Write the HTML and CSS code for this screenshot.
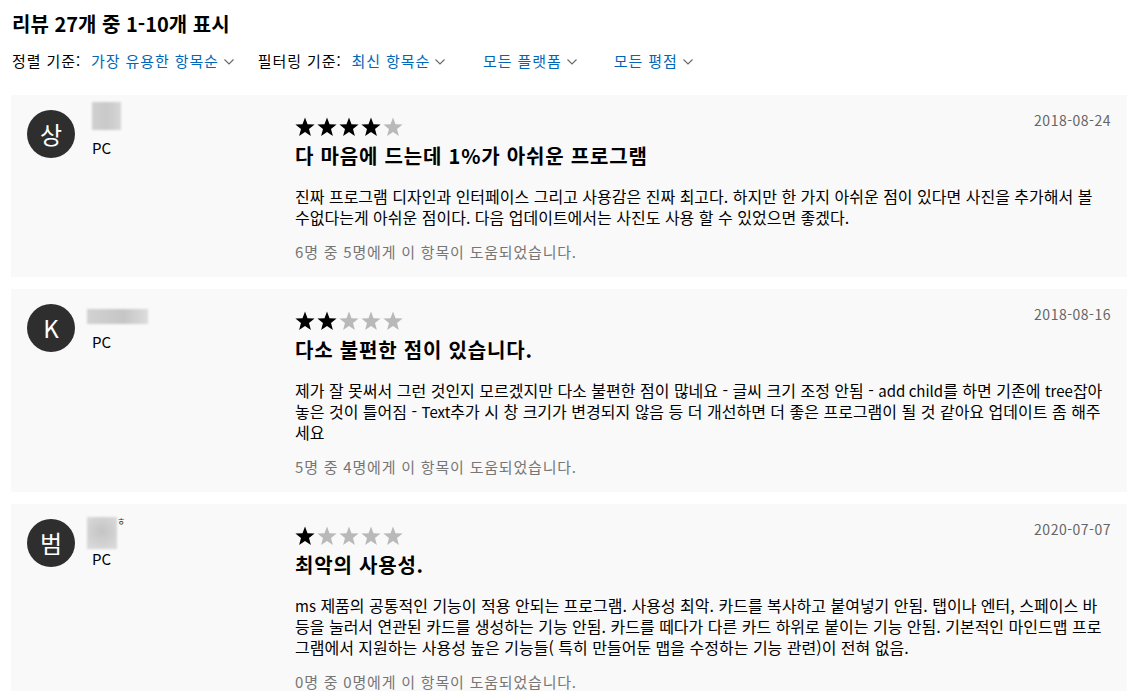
FILE: index.html
```html
<!DOCTYPE html>
<html lang="ko">
<head>
<meta charset="utf-8">
<title>리뷰</title>
<link rel="stylesheet" href="styles.css">
</head>
<body>
<div class="page">
  <h1 class="heading">리뷰 27개 중 1-10개 표시</h1>
  <div class="filters">
    <div class="group">
      <span class="label">정렬 기준:</span>
      <span class="select">가장 유용한 항목순<svg class="chev" viewBox="0 0 10 6"><path d="M0.5 0.5 L5 5 L9.5 0.5"/></svg></span>
    </div>
    <div class="group g2">
      <span class="label">필터링 기준:</span>
      <span class="select">최신 항목순<svg class="chev" viewBox="0 0 10 6"><path d="M0.5 0.5 L5 5 L9.5 0.5"/></svg></span>
    </div>
    <div class="group g3">
      <span class="select">모든 플랫폼<svg class="chev" viewBox="0 0 10 6"><path d="M0.5 0.5 L5 5 L9.5 0.5"/></svg></span>
    </div>
    <div class="group g4">
      <span class="select">모든 평점<svg class="chev" viewBox="0 0 10 6"><path d="M0.5 0.5 L5 5 L9.5 0.5"/></svg></span>
    </div>
  </div>

  <div class="reviews">
    <div class="card">
      <div class="author">
        <div class="avatar">상</div>
        <div class="who">
          <div class="namewrap"><div class="blur blur-sq"></div></div>
          <div class="platform">PC</div>
        </div>
      </div>
      <div class="content">
        <div class="top">
          <div class="stars">
            <svg class="star on" viewBox="0 0 20 20"><polygon points="10,0.5 12.5,7.2 19.6,7.5 14,11.9 15.9,18.9 10,14.9 4.1,18.9 6,11.9 0.4,7.5 7.5,7.2"/></svg>
            <svg class="star on" viewBox="0 0 20 20"><polygon points="10,0.5 12.5,7.2 19.6,7.5 14,11.9 15.9,18.9 10,14.9 4.1,18.9 6,11.9 0.4,7.5 7.5,7.2"/></svg>
            <svg class="star on" viewBox="0 0 20 20"><polygon points="10,0.5 12.5,7.2 19.6,7.5 14,11.9 15.9,18.9 10,14.9 4.1,18.9 6,11.9 0.4,7.5 7.5,7.2"/></svg>
            <svg class="star on" viewBox="0 0 20 20"><polygon points="10,0.5 12.5,7.2 19.6,7.5 14,11.9 15.9,18.9 10,14.9 4.1,18.9 6,11.9 0.4,7.5 7.5,7.2"/></svg>
            <svg class="star off" viewBox="0 0 20 20"><polygon points="10,0.5 12.5,7.2 19.6,7.5 14,11.9 15.9,18.9 10,14.9 4.1,18.9 6,11.9 0.4,7.5 7.5,7.2"/></svg>
          </div>
          <div class="date">2018-08-24</div>
        </div>
        <h2 class="title">다 마음에 드는데 1%가 아쉬운 프로그램</h2>
        <p class="body">진짜 프로그램 디자인과 인터페이스 그리고 사용감은 진짜 최고다. 하지만 한 가지 아쉬운 점이 있다면 사진을 추가해서 볼 수없다는게 아쉬운 점이다. 다음 업데이트에서는 사진도 사용 할 수 있었으면 좋겠다.</p>
        <p class="helpful">6명 중 5명에게 이 항목이 도움되었습니다.</p>
      </div>
    </div>

    <div class="card">
      <div class="author">
        <div class="avatar">K</div>
        <div class="who">
          <div class="namewrap"><div class="blur blur-wide"></div></div>
          <div class="platform">PC</div>
        </div>
      </div>
      <div class="content">
        <div class="top">
          <div class="stars">
            <svg class="star on" viewBox="0 0 20 20"><polygon points="10,0.5 12.5,7.2 19.6,7.5 14,11.9 15.9,18.9 10,14.9 4.1,18.9 6,11.9 0.4,7.5 7.5,7.2"/></svg>
            <svg class="star on" viewBox="0 0 20 20"><polygon points="10,0.5 12.5,7.2 19.6,7.5 14,11.9 15.9,18.9 10,14.9 4.1,18.9 6,11.9 0.4,7.5 7.5,7.2"/></svg>
            <svg class="star off" viewBox="0 0 20 20"><polygon points="10,0.5 12.5,7.2 19.6,7.5 14,11.9 15.9,18.9 10,14.9 4.1,18.9 6,11.9 0.4,7.5 7.5,7.2"/></svg>
            <svg class="star off" viewBox="0 0 20 20"><polygon points="10,0.5 12.5,7.2 19.6,7.5 14,11.9 15.9,18.9 10,14.9 4.1,18.9 6,11.9 0.4,7.5 7.5,7.2"/></svg>
            <svg class="star off" viewBox="0 0 20 20"><polygon points="10,0.5 12.5,7.2 19.6,7.5 14,11.9 15.9,18.9 10,14.9 4.1,18.9 6,11.9 0.4,7.5 7.5,7.2"/></svg>
          </div>
          <div class="date">2018-08-16</div>
        </div>
        <h2 class="title">다소 불편한 점이 있습니다.</h2>
        <p class="body">제가 잘 못써서 그런 것인지 모르겠지만 다소 불편한 점이 많네요 - 글씨 크기 조정 안됨 - <span class="latin" lang="en">add child</span>를 하면 기존에 <span class="latin" lang="en">tree</span>잡아 놓은 것이 틀어짐 - <span class="latin" lang="en">Text</span>추가 시 창 크기가 변경되지 않음 등 더 개선하면 더 좋은 프로그램이 될 것 같아요 업데이트 좀 해주세요</p>
        <p class="helpful">5명 중 4명에게 이 항목이 도움되었습니다.</p>
      </div>
    </div>

    <div class="card">
      <div class="author">
        <div class="avatar">범</div>
        <div class="who">
          <div class="namewrap namewrap-tall"><div class="blur blur-tall"></div><span class="namechar">ㅎ</span></div>
          <div class="platform">PC</div>
        </div>
      </div>
      <div class="content">
        <div class="top">
          <div class="stars">
            <svg class="star on" viewBox="0 0 20 20"><polygon points="10,0.5 12.5,7.2 19.6,7.5 14,11.9 15.9,18.9 10,14.9 4.1,18.9 6,11.9 0.4,7.5 7.5,7.2"/></svg>
            <svg class="star off" viewBox="0 0 20 20"><polygon points="10,0.5 12.5,7.2 19.6,7.5 14,11.9 15.9,18.9 10,14.9 4.1,18.9 6,11.9 0.4,7.5 7.5,7.2"/></svg>
            <svg class="star off" viewBox="0 0 20 20"><polygon points="10,0.5 12.5,7.2 19.6,7.5 14,11.9 15.9,18.9 10,14.9 4.1,18.9 6,11.9 0.4,7.5 7.5,7.2"/></svg>
            <svg class="star off" viewBox="0 0 20 20"><polygon points="10,0.5 12.5,7.2 19.6,7.5 14,11.9 15.9,18.9 10,14.9 4.1,18.9 6,11.9 0.4,7.5 7.5,7.2"/></svg>
            <svg class="star off" viewBox="0 0 20 20"><polygon points="10,0.5 12.5,7.2 19.6,7.5 14,11.9 15.9,18.9 10,14.9 4.1,18.9 6,11.9 0.4,7.5 7.5,7.2"/></svg>
          </div>
          <div class="date">2020-07-07</div>
        </div>
        <h2 class="title">최악의 사용성.</h2>
        <p class="body"><span class="latin" lang="en">ms</span> 제품의 공통적인 기능이 적용 안되는 프로그램. 사용성 최악. 카드를 복사하고 붙여넣기 안됨. 탭이나 엔터, 스페이스 바 등을 눌러서 연관된 카드를 생성하는 기능 안됨. 카드를 떼다가 다른 카드 하위로 붙이는 기능 안됨. 기본적인 마인드맵 프로그램에서 지원하는 사용성 높은 기능들( 특히 만들어둔 맵을 수정하는 기능 관련)이 전혀 없음.</p>
        <p class="helpful">0명 중 0명에게 이 항목이 도움되었습니다.</p>
      </div>
    </div>
  </div>
</div>
</body>
</html>
```

FILE: styles.css
```css
html, body {
  margin: 0;
  padding: 0;
  background: #ffffff;
}

body {
  font-family: "Noto Sans CJK KR", "Noto Sans", sans-serif;
  color: #000000;
}

.page {
  padding: 10px 0 0 11px;
  width: 1116px;
}

.heading {
  margin: 0;
  padding-left: 1px;
  font-size: 20px;
  font-weight: 700;
  line-height: 28px;
}

.filters {
  display: flex;
  align-items: center;
  margin-top: 12px;
  padding-left: 1px;
  font-size: 15px;
  line-height: 22px;
  letter-spacing: 0.9px;
}

.group {
  display: flex;
  align-items: center;
}

.g2 {
  margin-left: 24px;
}

.g3 {
  margin-left: 38px;
}

.g4 {
  margin-left: 37px;
}

.label {
  color: #000000;
  margin-right: 10px;
}

.select {
  display: flex;
  align-items: center;
  color: #0067b8;
}

.chev {
  width: 10px;
  height: 6px;
  margin-left: 5px;
  margin-top: 2px;
  fill: none;
  stroke: #666666;
  stroke-width: 1.1;
}

.reviews {
  margin-top: 23px;
  display: flex;
  flex-direction: column;
  gap: 12px;
}

.card {
  display: flex;
  background: #f9f9f9;
  padding: 15px 17px 15px 16px;
}

.author {
  width: 268px;
  flex: none;
  display: flex;
  align-items: flex-start;
}

.avatar {
  width: 48px;
  height: 48px;
  border-radius: 50%;
  background: #2e2e2e;
  color: #ffffff;
  font-size: 24px;
  line-height: 48px;
  text-align: center;
}

.who {
  margin-left: 17px;
  margin-top: -8px;
}

.namewrap {
  height: 28px;
  display: flex;
  align-items: flex-end;
}

.namewrap-tall {
  height: 38px;
}

.blur {
  background: linear-gradient(90deg, #d0d0d0, #c9c9c9 50%, #d6d6d6);
  filter: blur(0.8px);
}

.blur-sq {
  width: 29px;
  height: 28px;
}

.blur-wide {
  width: 61px;
  height: 15px;
  margin-left: -5px;
  background: linear-gradient(90deg, #d2d2d2, #c6c6c6 60%, #dcdcdc);
}

.blur-tall {
  width: 30px;
  height: 32px;
  margin-left: -5px;
  background: radial-gradient(circle at 50% 45%, #c4c4c4, #d8d8d8 80%);
}

.namechar {
  align-self: flex-start;
  font-size: 9px;
  line-height: 10px;
  margin-top: 6px;
  color: #333333;
}

.platform {
  margin-top: 8px;
  font-size: 15px;
  line-height: 20px;
}

.namewrap-tall + .platform {
  margin-top: 0;
}

.content {
  flex: 1;
  min-width: 0;
}

.top {
  display: flex;
  justify-content: space-between;
  align-items: flex-start;
  margin-right: -1px;
}

.stars {
  display: flex;
  gap: 2px;
  margin-top: 7px;
}

.star {
  width: 20px;
  height: 20px;
  display: block;
}

.star.on {
  fill: #000000;
}

.star.off {
  fill: #b9b9b9;
}

.date {
  font-size: 14px;
  line-height: 20px;
  color: #666666;
  letter-spacing: 0.5px;
}

.title {
  margin: 6px 0 0 0;
  font-size: 20px;
  font-weight: 700;
  line-height: 26px;
  letter-spacing: 0.8px;
}

.body {
  margin: 17px 0 0 0;
  font-size: 16px;
  line-height: 21px;
}

.latin {
  font-size: 15px;
  line-height: 1;
}

.helpful {
  margin: 13px 0 0 0;
  font-size: 15px;
  line-height: 21px;
  color: #767676;
  letter-spacing: 0.8px;
}
```
